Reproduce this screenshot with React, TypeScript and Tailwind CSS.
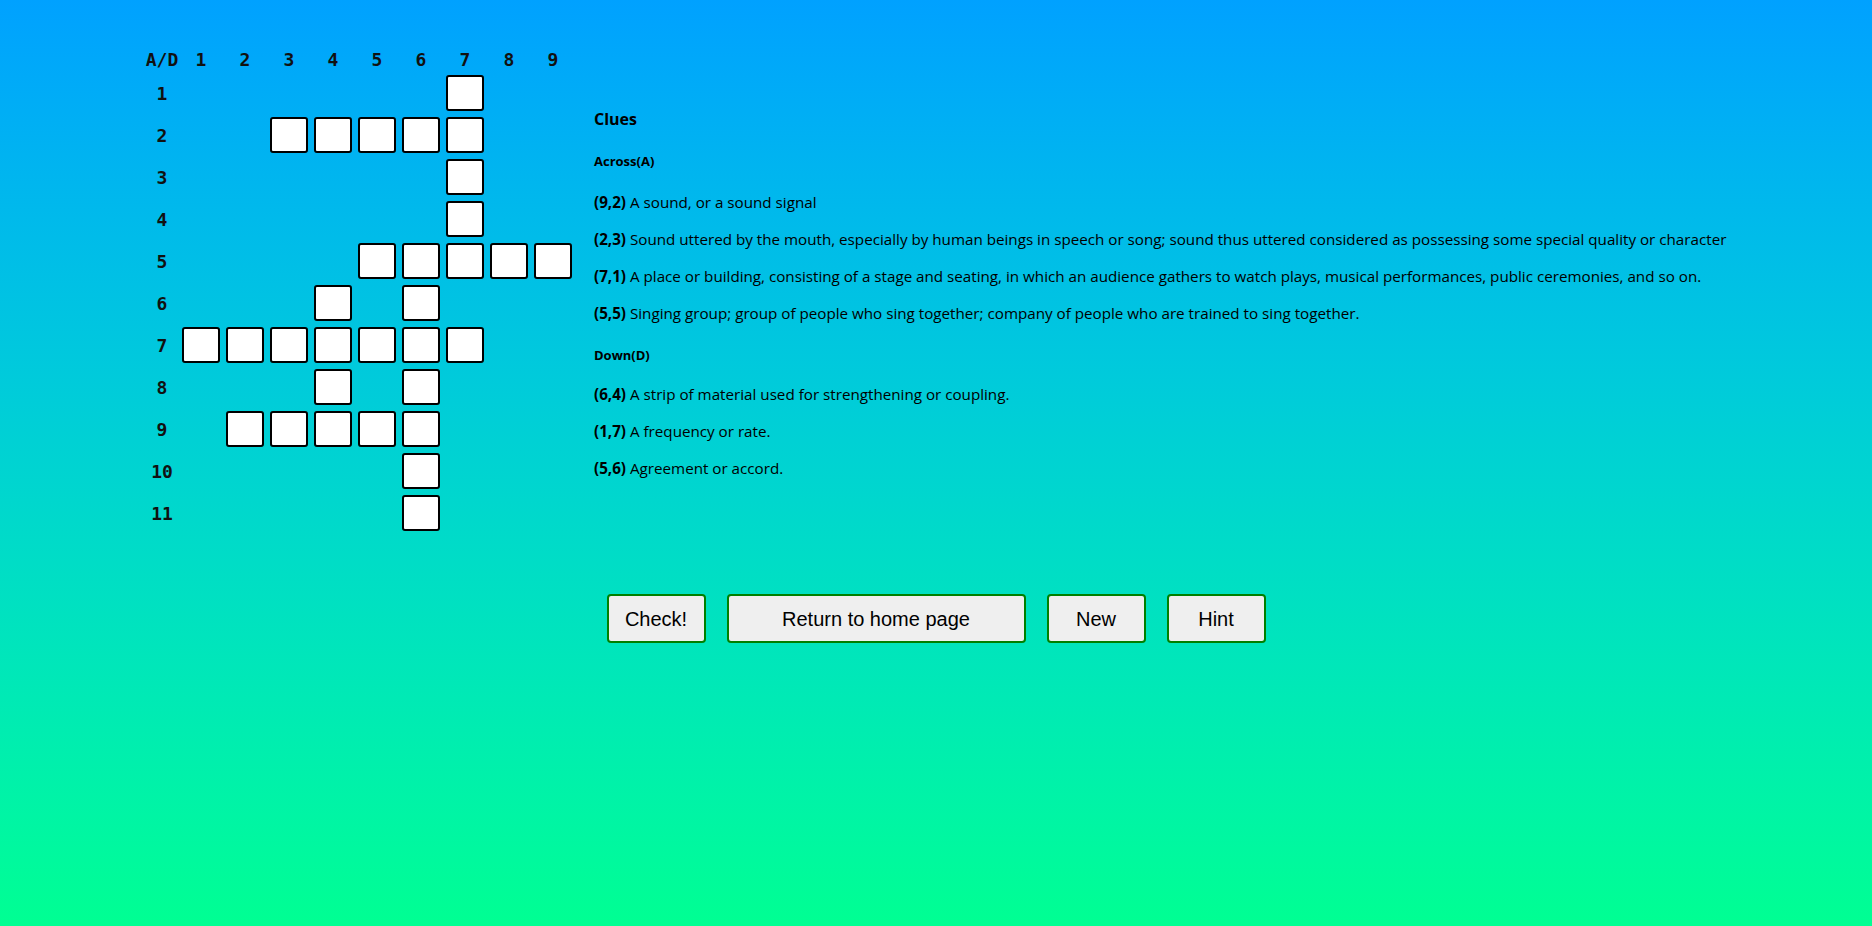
import React from 'react';

// row -> columns that hold a letter box
const CELLS: Record<number, number[]> = {
  1: [7],
  2: [3, 4, 5, 6, 7],
  3: [7],
  4: [7],
  5: [5, 6, 7, 8, 9],
  6: [4, 6],
  7: [1, 2, 3, 4, 5, 6, 7],
  8: [4, 6],
  9: [2, 3, 4, 5, 6],
  10: [6],
  11: [6],
};

const ACROSS = [
  ['(9,2)', 'A sound, or a sound signal'],
  [
    '(2,3)',
    'Sound uttered by the mouth, especially by human beings in speech or song; sound thus uttered considered as possessing some special quality or character',
  ],
  [
    '(7,1)',
    'A place or building, consisting of a stage and seating, in which an audience gathers to watch plays, musical performances, public ceremonies, and so on.',
  ],
  ['(5,5)', 'Singing group; group of people who sing together; company of people who are trained to sing together.'],
];

const DOWN = [
  ['(6,4)', 'A strip of material used for strengthening or coupling.'],
  ['(1,7)', 'A frequency or rate.'],
  ['(5,6)', 'Agreement or accord.'],
];

const cols = [1, 2, 3, 4, 5, 6, 7, 8, 9];
const rows = [1, 2, 3, 4, 5, 6, 7, 8, 9, 10, 11];

function Clue({ id, text }: { id: string; text: string }) {
  return (
    <p className="leading-[21px] mb-[16px] whitespace-nowrap">
      <b>{id}</b> {text}
    </p>
  );
}

export default function App() {
  return (
    <div className="min-h-screen bg-gradient-to-b from-[#00a1ff] to-[#00ff92] text-black">
      <div className="flex gap-[22px] pl-[142px] pt-[50px]">
        {/* Grid */}
        <div className="flex flex-col gap-[6px] font-['DejaVu_Sans_Mono',monospace] font-bold text-[18px] text-[#111]">
          <div className="flex h-[19px] items-center">
            <div className="w-[40px] text-center">A/D</div>
            <div className="flex gap-[6px]">
              {cols.map((c) => (
                <div key={c} className="w-[38px] text-center">
                  {c}
                </div>
              ))}
            </div>
          </div>
          {rows.map((r) => (
            <div key={r} className="flex h-[36px] items-center">
              <div className="w-[40px] text-center pt-[1px]">{r}</div>
              <div className="flex gap-[6px]">
                {cols.map((c) =>
                  CELLS[r].includes(c) ? (
                    <div key={c} className="w-[38px] h-[36px] bg-white border-2 border-black rounded-[3px]" />
                  ) : (
                    <div key={c} className="w-[38px] h-[36px]" />
                  )
                )}
              </div>
            </div>
          ))}
        </div>

        {/* Clues */}
        <div className="pt-[59px] font-['Open_Sans',sans-serif] text-[15.2px]">
          <h4 className="font-bold text-[16px] leading-[21px] mb-[22px]">Clues</h4>
          <h5 className="font-bold text-[13px] leading-[18px] mb-[22px]">Across(A)</h5>
          {ACROSS.map(([id, text]) => (
            <Clue key={id} id={id} text={text} />
          ))}
          <h5 className="font-bold text-[13px] leading-[18px] mt-[22px] mb-[20px]">Down(D)</h5>
          {DOWN.map(([id, text]) => (
            <Clue key={id} id={id} text={text} />
          ))}
        </div>
      </div>

      {/* Buttons */}
      <div className="flex justify-center gap-[21px] mt-[63px] font-['Liberation_Sans',Arial,sans-serif] text-[20px]">
        <button className="w-[99px] h-[49px] bg-[#efefef] border-2 border-[#008000] rounded-[4px]">Check!</button>
        <button className="w-[299px] h-[49px] bg-[#efefef] border-2 border-[#008000] rounded-[4px]">
          Return to home page
        </button>
        <button className="w-[99px] h-[49px] bg-[#efefef] border-2 border-[#008000] rounded-[4px]">New</button>
        <button className="w-[99px] h-[49px] bg-[#efefef] border-2 border-[#008000] rounded-[4px]">Hint</button>
      </div>
    </div>
  );
}
